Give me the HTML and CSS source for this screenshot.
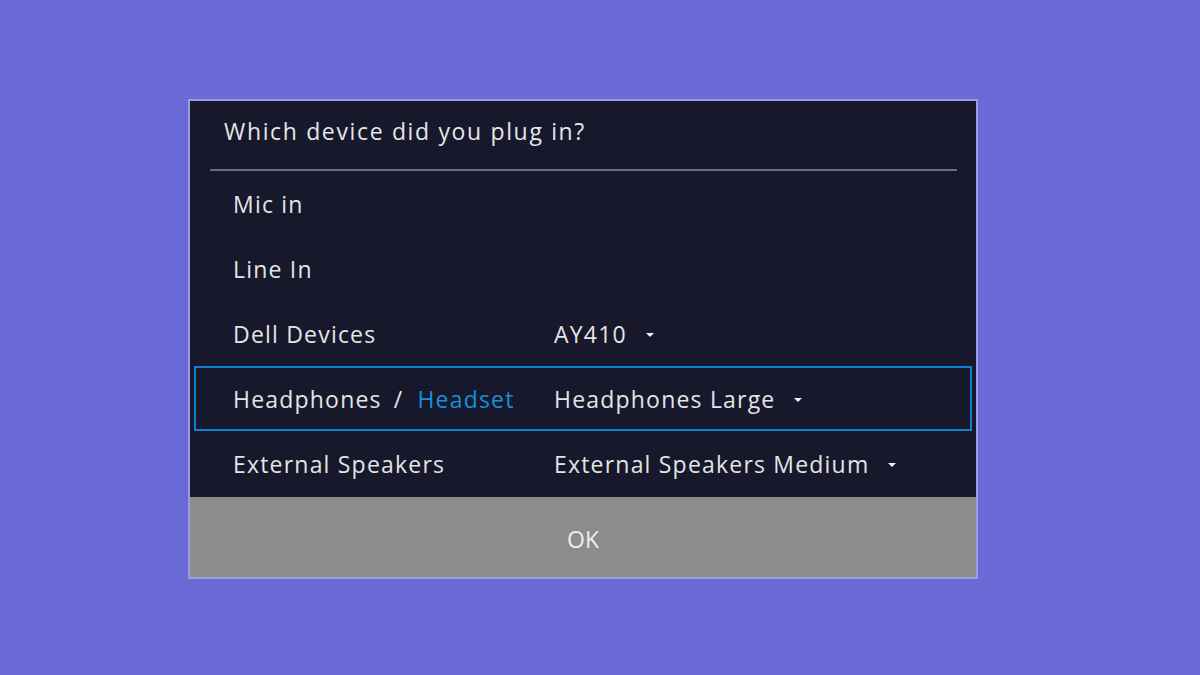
FILE: index.html
```html
<!DOCTYPE html>
<html lang="en">
<head>
    <meta charset="UTF-8">
    <title>Device Picker</title>
    <link rel="stylesheet" href="styles.css">
</head>
<body>
    <div class="dialog">
        <div class="dialog-header">
            <h2>Which device did you plug in?</h2>
        </div>

        <div class="device-list">
            <div class="device-row">
                <span class="device-name">Mic in</span>
            </div>
            <div class="device-row">
                <span class="device-name">Line In</span>
            </div>
            <div class="device-row">
                <span class="device-name">Dell Devices</span>
                <span class="device-type">AY410<span class="caret"></span></span>
            </div>
            <div class="device-row selected">
                <span class="device-name">Headphones<span class="slash">/</span><span class="accent">Headset</span></span>
                <span class="device-type">Headphones Large<span class="caret"></span></span>
            </div>
            <div class="device-row">
                <span class="device-name">External Speakers</span>
                <span class="device-type">External Speakers Medium<span class="caret"></span></span>
            </div>
        </div>

        <button type="button" class="ok-button">OK</button>
    </div>
</body>
</html>
```

FILE: styles.css
```css
* {
    margin: 0;
    padding: 0;
    box-sizing: border-box;
}

body {
    background-color: #6b69d6;
    font-family: 'Open Sans', 'Noto Sans', sans-serif;
    min-height: 100vh;
    padding: 99px 0 0 188px;
}

.dialog {
    width: 790px;
    background-color: #17182b;
    border: 2px solid #9d9ce0;
}

.dialog-header {
    padding: 0 19px 0 20px;
}

.dialog-header h2 {
    font-size: 23px;
    font-weight: 400;
    letter-spacing: 1.65px;
    color: #e6e6e6;
    padding: 14px 0 0 14px;
    height: 70px;
    border-bottom: 2px solid #6c6d78;
}

.device-list {
    padding: 0 4px 1px;
}

.device-row {
    display: flex;
    align-items: center;
    height: 65px;
    padding: 1px 0 0 37px;
    border: 2px solid transparent;
    font-size: 23px;
    letter-spacing: 1.2px;
    color: #e4e4e4;
}

.device-row.selected {
    border-color: #0d82cf;
}

.device-name {
    width: 321px;
}

.slash {
    margin: 0 14px 0 12px;
}

.accent {
    color: #1690d8;
}

.device-type {
    display: flex;
    align-items: center;
}

.caret {
    display: inline-block;
    margin-left: 19px;
    margin-top: 1px;
    border-left: 4px solid transparent;
    border-right: 4px solid transparent;
    border-top: 4px solid #f0f0f0;
}

.ok-button {
    display: block;
    width: 100%;
    height: 80px;
    padding-top: 3px;
    border: none;
    background-color: #8c8c8c;
    color: #ececec;
    font-family: 'Open Sans', 'Noto Sans', sans-serif;
    font-size: 23px;
    cursor: pointer;
}
```
